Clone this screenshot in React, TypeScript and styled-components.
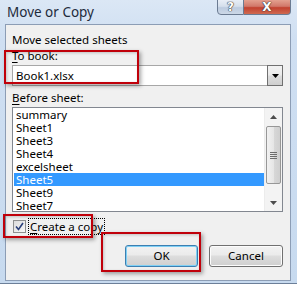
import React from "react";
import styled, { createGlobalStyle } from "styled-components";

const Global = createGlobalStyle`
  html, body { margin: 0; padding: 0; background: #cfdff1; }
  body { font-family: "Noto Sans", "Open Sans", sans-serif; }
`;

const Window = styled.div`
  position: relative;
  width: 297px;
  height: 284px;
  box-sizing: border-box;
  display: flex;
  flex-direction: column;
  background: linear-gradient(180deg, #dbe7f5 0px, #cfdff2 40px, #c7daef 284px);
  border-bottom: 1px solid #6c7f99;
  overflow: hidden;
`;

const TitleBar = styled.div`
  height: 24px;
  display: flex;
  align-items: flex-start;
  justify-content: space-between;
  flex-shrink: 0;
`;

const Title = styled.div`
  font-size: 13.5px;
  color: #1e2b3c;
  padding: 3px 0 0 7px;
  line-height: 18px;
`;

const Caption = styled.div`
  display: flex;
  margin-right: 6px;
  margin-top: -1px;
`;

const CapButton = styled.div<{ $close?: boolean }>`
  width: ${(p) => (p.$close ? 47 : 27)}px;
  height: 16px;
  box-sizing: border-box;
  border: 1px solid #6b7b92;
  border-left-width: ${(p) => (p.$close ? 0 : 1)}px;
  border-radius: ${(p) => (p.$close ? "0 0 4px 0" : "0 0 0 4px")};
  background: ${(p) =>
    p.$close
      ? "linear-gradient(180deg, #e3a08f 0%, #d1786a 45%, #c2412f 55%, #cf6a52 100%)"
      : "linear-gradient(180deg, #e8eef6 0%, #d5dfec 45%, #bccbdf 55%, #ccd8e7 100%)"};
  display: flex;
  align-items: center;
  justify-content: center;
  color: #fff;
  font-family: "DejaVu Sans", sans-serif;
  font-weight: bold;
  font-size: 12px;
  line-height: 1;
  text-shadow: 0 0 1px #333, 0 0 1px #333, 0 0 1px #333;
`;

const Client = styled.div`
  flex: 1;
  margin: 0 6px 2px 5px;
  border: 1px solid #8c9db5;
  background: #f0f0f0;
  padding: 7px 7px 0 6px;
  display: flex;
  flex-direction: column;
  font-size: 11.5px;
  color: #000;
`;

const Label = styled.div<{ $mt?: number }>`
  line-height: 16px;
  height: 16px;
  margin-top: ${(p) => p.$mt ?? 0}px;
  white-space: nowrap;
`;

const U = styled.span`
  text-decoration: underline;
  text-underline-offset: 2px;
`;

const Combo = styled.div`
  margin-top: 1px;
  height: 21px;
  box-sizing: border-box;
  border: 1px solid #a7a7a7;
  background: #fff;
  display: flex;
  align-items: stretch;
`;

const ComboText = styled.div`
  flex: 1;
  padding-left: 3px;
  line-height: 19px;
`;

const DropButton = styled.div`
  width: 16px;
  box-sizing: border-box;
  border: 1px solid #707070;
  margin: -1px -1px -1px 0;
  background: linear-gradient(180deg, #f2f2f2 0%, #ebebeb 45%, #dcdcdc 55%, #cfcfcf 100%);
  display: flex;
  align-items: center;
  justify-content: center;
`;

const ListBox = styled.div`
  margin-top: 1px;
  height: 105px;
  box-sizing: border-box;
  border: 1px solid #828790;
  background: #fff;
  display: flex;
  padding: 0 0 0 1px;
`;

const Items = styled.div`
  flex: 1;
  padding-top: 0px;
`;

const Item = styled.div<{ $sel?: boolean }>`
  height: 13px;
  line-height: 13px;
  padding-left: 2px;
  background: ${(p) => (p.$sel ? "#3399ff" : "transparent")};
  color: ${(p) => (p.$sel ? "#fff" : "#000")};
  white-space: nowrap;
`;

const ScrollBar = styled.div`
  width: 17px;
  background: #f3f3f3;
  border-left: 1px solid #ececec;
  display: flex;
  flex-direction: column;
  align-items: center;
`;

const ScrollArrow = styled.div`
  height: 17px;
  width: 100%;
  display: flex;
  align-items: center;
  justify-content: center;
`;

const Thumb = styled.div`
  margin-top: 1px;
  width: 15px;
  height: 58px;
  box-sizing: border-box;
  border: 1px solid #979797;
  border-radius: 2px;
  background: linear-gradient(90deg, #f1f1f1 0%, #e6e6e6 50%, #d8d8d8 51%, #cfcfcf 100%);
  display: flex;
  align-items: center;
  justify-content: center;
`;

const Spacer = styled.div`
  flex: 1;
`;

const CheckRow = styled.div`
  margin-top: 6px;
  display: flex;
  align-items: center;
  gap: 3px;
  padding-left: 1px;
  height: 17px;
`;

const CheckBox = styled.div`
  width: 13px;
  height: 13px;
  box-sizing: border-box;
  border: 1px solid #8e8f8f;
  background: linear-gradient(135deg, #dcdcdc 0%, #f7f7f7 100%);
  display: flex;
  align-items: center;
  justify-content: center;
`;

const CheckLabel = styled.div`
  outline: 1px dotted #000;
  padding: 0 1px;
  line-height: 15px;
  white-space: nowrap;
`;

const ButtonRow = styled.div`
  margin-top: 10px;
  display: flex;
  justify-content: flex-end;
  gap: 11px;
`;

const Button = styled.div<{ $default?: boolean }>`
  width: ${(p) => (p.$default ? 73 : 74)}px;
  height: 22px;
  box-sizing: border-box;
  border: 1px solid ${(p) => (p.$default ? "#3c7fb1" : "#707070")};
  border-radius: 3px;
  background: linear-gradient(180deg, #f2f2f2 0%, #ebebeb 45%, #dddddd 50%, #cfcfcf 100%);
  box-shadow: ${(p) => (p.$default ? "inset 0 0 0 1px #7fd0f5" : "inset 0 0 0 1px #fcfcfc")};
  display: flex;
  align-items: center;
  justify-content: center;
  line-height: 1;
`;

const Mark = styled.div`
  position: absolute;
  border: 2px solid #c0000a;
  box-shadow: 2px 2px 4px rgba(0, 0, 0, 0.35), inset 1px 1px 3px rgba(0, 0, 0, 0.2);
  box-sizing: border-box;
  pointer-events: none;
`;

const sheets = ["summary", "Sheet1", "Sheet3", "Sheet4", "excelsheet", "Sheet5", "Sheet9", "Sheet7"];

export default function App() {
  return (
    <>
      <Global />
      <Window>
        <TitleBar>
          <Title>Move or Copy</Title>
          <Caption>
            <CapButton>?</CapButton>
            <CapButton $close>X</CapButton>
          </Caption>
        </TitleBar>
        <Client>
          <Label>Move selected sheets</Label>
          <Label>
            <U>T</U>o book:
          </Label>
          <Combo>
            <ComboText>Book1.xlsx</ComboText>
            <DropButton>
              <svg width="7" height="4" viewBox="0 0 7 4">
                <path d="M0 0h7L3.5 4z" fill="#000" />
              </svg>
            </DropButton>
          </Combo>
          <Label $mt={4}>
            <U>B</U>efore sheet:
          </Label>
          <ListBox>
            <Items>
              {sheets.map((s) => (
                <Item key={s} $sel={s === "Sheet5"}>
                  {s}
                </Item>
              ))}
            </Items>
            <ScrollBar>
              <ScrollArrow>
                <svg width="7" height="4" viewBox="0 0 7 4">
                  <path d="M3.5 0L7 4H0z" fill="#4d4d4d" />
                </svg>
              </ScrollArrow>
              <Thumb>
                <svg width="7" height="7" viewBox="0 0 7 7">
                  <path d="M0 .5h7M0 2.5h7M0 4.5h7M0 6.5h7" stroke="#6d6d6d" strokeWidth="1" />
                </svg>
              </Thumb>
              <Spacer />
              <ScrollArrow>
                <svg width="7" height="4" viewBox="0 0 7 4">
                  <path d="M0 0h7L3.5 4z" fill="#4d4d4d" />
                </svg>
              </ScrollArrow>
            </ScrollBar>
          </ListBox>
          <CheckRow>
            <CheckBox>
              <svg width="9" height="9" viewBox="0 0 9 9">
                <path d="M1 4.5l2.5 3L8 1" fill="none" stroke="#2a3f7a" strokeWidth="1.6" />
              </svg>
            </CheckBox>
            <CheckLabel>
              <U>C</U>reate a copy
            </CheckLabel>
          </CheckRow>
          <ButtonRow>
            <Button $default>OK</Button>
            <Button>Cancel</Button>
          </ButtonRow>
        </Client>
        <Mark style={{ left: 4, top: 50, width: 135, height: 34 }} />
        <Mark style={{ left: 3, top: 214, width: 90, height: 24 }} />
        <Mark style={{ left: 101, top: 232, width: 100, height: 40 }} />
      </Window>
    </>
  );
}
